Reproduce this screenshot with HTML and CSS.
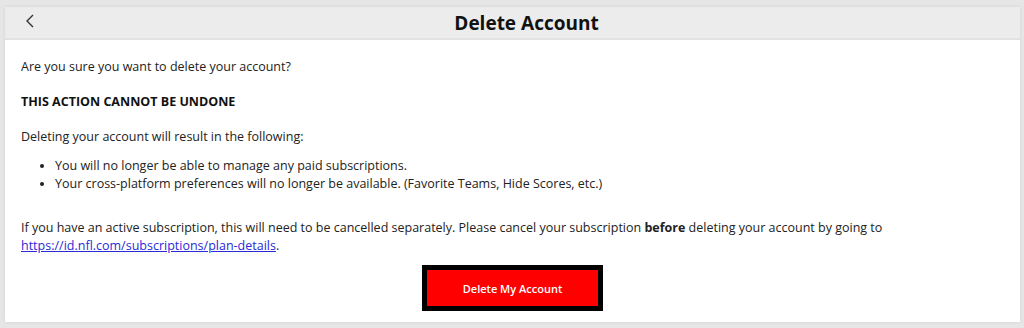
FILE: index.html
```html
<!DOCTYPE html>
<html lang="en">
<head>
  <meta charset="UTF-8">
  <title>Delete Account</title>
  <link rel="stylesheet" href="styles.css">
</head>
<body>
  <div class="card">
    <div class="header">
      <button class="back" aria-label="Back">
        <svg width="10" height="14" viewBox="0 0 10 14"><path d="M8 1 L2 7 L8 13" fill="none" stroke="#333" stroke-width="1.4"/></svg>
      </button>
      <h1>Delete Account</h1>
    </div>
    <div class="body">
      <p>Are you sure you want to delete your account?</p>
      <p class="warning">THIS ACTION CANNOT BE UNDONE</p>
      <p class="intro">Deleting your account will result in the following:</p>
      <ul>
        <li>You will no longer be able to manage any paid subscriptions.</li>
        <li>Your cross-platform preferences will no longer be available. (Favorite Teams, Hide Scores, etc.)</li>
      </ul>
      <p class="note">If you have an active subscription, this will need to be cancelled separately. Please cancel your subscription <strong>before</strong> deleting your account by going to <a href="#">https://id.nfl.com/subscriptions/plan-details</a>.</p>
      <div class="actions">
        <button class="btn-delete">Delete My Account</button>
      </div>
    </div>
  </div>
</body>
</html>
```
FILE: styles.css
```css
body {
  margin: 0;
  padding: 7px 4px 4px 5px;
  background-color: #e6e6e6;
  font-family: 'Open Sans', 'Noto Sans', sans-serif;
  color: #222;
}

.card {
  background: white;
  box-shadow: 0 0 4px rgba(0,0,0,0.08);
}

.header {
  position: relative;
  height: 31px;
  background-color: #ececec;
  border-bottom: 2px solid #e2e2e2;
  display: flex;
  align-items: center;
  justify-content: center;
}

.header h1 {
  margin: 0;
  padding-left: 28px;
  font-size: 19px;
  font-weight: bold;
  color: #111;
}

.back {
  position: absolute;
  left: 20px;
  top: 7px;
  background: none;
  border: none;
  padding: 0;
}

.body {
  padding: 18px 16px 11px 16px;
  font-size: 12.5px;
}

.body p {
  margin: 0 0 17px 0;
  line-height: 18px;
}

.warning {
  font-weight: bold;
  color: #111;
}

.body .intro {
  margin-bottom: 11px;
}

.body ul {
  margin: 0 0 26px 0;
  padding-left: 34px;
  line-height: 18px;
}

.body .note {
  margin-bottom: 10px;
}

.note a {
  color: #2a2ad8;
}

.actions {
  display: flex;
  justify-content: center;
}

.btn-delete {
  width: 181px;
  height: 46px;
  background-color: #ff0000;
  border: 5px solid #000;
  color: white;
  font-family: inherit;
  font-weight: 600;
  font-size: 11px;
}
```
